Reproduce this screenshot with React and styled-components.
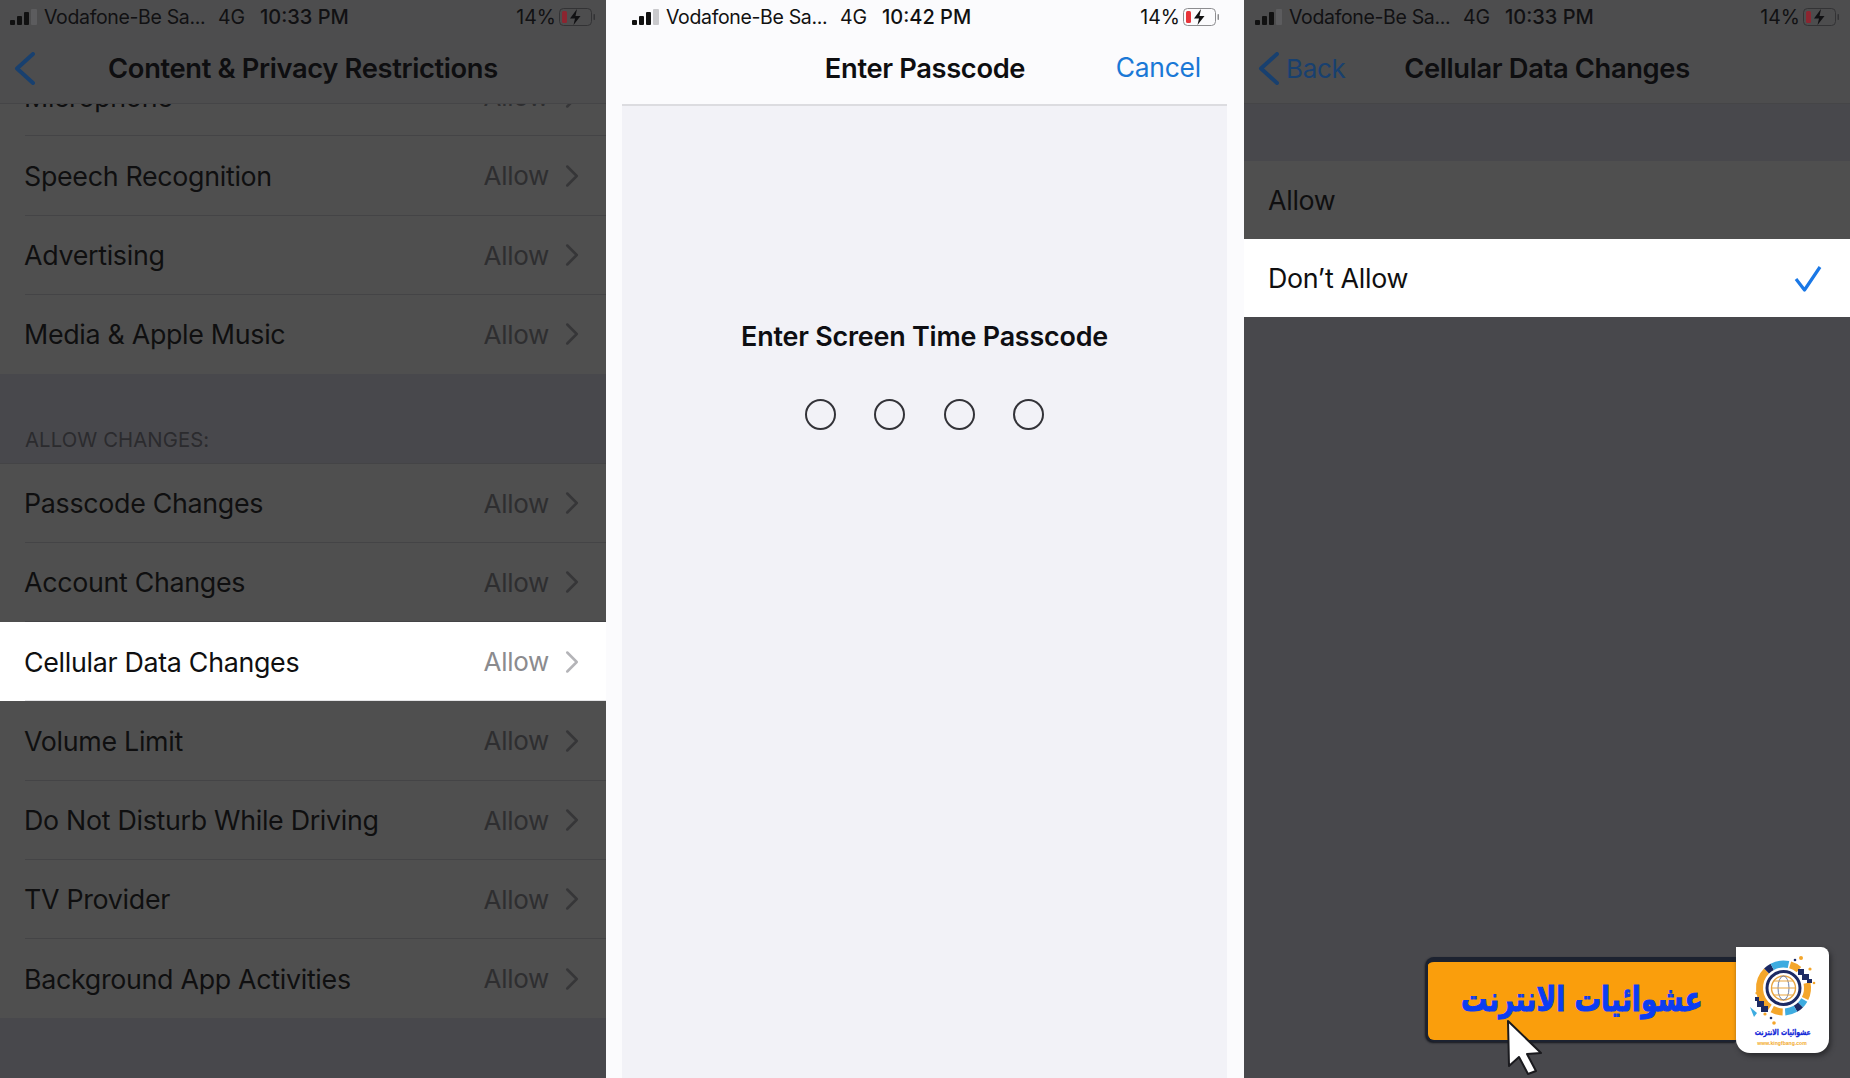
import React from "react";
import styled, { createGlobalStyle } from "styled-components";
import { ChevronRight } from "lucide-react";

/**
 * styles
 */
const GlobalStyle = createGlobalStyle`
  html, body {
    margin: 0;
    padding: 0;
    background: #fff;
  }

  body {
    font-family: Inter, "Liberation Sans", sans-serif;
    -webkit-font-smoothing: antialiased;
  }
`;

const Page = styled.div`
  display: flex;
  width: 1850px;
  height: 1078px;
  overflow: hidden;
`;

const Screen = styled.section`
  position: relative;
  display: flex;
  flex-direction: column;
  flex: 0 0 ${({ $width }) => $width}px;
  height: 100%;
  background: #48484c;
`;

const LightScreen = styled.section`
  display: flex;
  flex-direction: column;
  flex: 0 0 638px;
  height: 100%;
  background: #fbfbfd;
`;

const Status = styled.div`
  display: flex;
  align-items: center;
  flex: 0 0 34px;
  padding: ${({ $pad }) => $pad};
  font-size: 19.5px;
  color: ${({ $light }) => ($light ? "#111" : "#111113")};
  background: ${({ $light }) => ($light ? "transparent" : "#4d4d4e")};
`;

const Carrier = styled.span`
  flex: 0 0 174px;
  margin-left: 7px;
  white-space: nowrap;
  letter-spacing: -0.35px;
`;

const Network = styled.span`
  flex: 0 0 42px;
`;

const Clock = styled.span`
  font-size: 20px;
  font-weight: 500;
`;

const Battery = styled.span`
  margin-left: auto;
  display: flex;
  align-items: center;
  gap: 3px;
`;

const NavBar = styled.header`
  position: relative;
  display: flex;
  align-items: center;
  justify-content: center;
  flex: 0 0 70px;
  box-sizing: border-box;
  padding-bottom: 1px;
  font-size: 27.3px;
  font-weight: 600;
  letter-spacing: -0.35px;
  color: #0e0e10;
  background: ${({ $light }) => ($light ? "transparent" : "#4d4d4e")};
  border-bottom: ${({ $light }) =>
    $light ? "none" : "1px solid #454547"};
`;

const NavBack = styled.span`
  position: absolute;
  left: 14px;
  top: 18px;
  display: flex;
  align-items: center;
  gap: 7px;
  height: 33px;
  font-size: 26px;
  font-weight: 400;
  color: #18406f;
`;

const NavAction = styled.span`
  position: absolute;
  right: 43px;
  top: 17px;
  font-size: 26.4px;
  font-weight: 400;
  letter-spacing: -0.2px;
  color: #1a78d6;
`;

const Scroller = styled.div`
  flex: 1;
  overflow: hidden;
`;

const List = styled.div`
  margin-top: -47px;
`;

const Group = styled.div`
  background: ${({ $light }) => ($light ? "#fff" : "#4f4f4f")};
`;

const Row = styled.div`
  position: relative;
  display: flex;
  align-items: center;
  box-sizing: border-box;
  height: 79.25px;
  padding: 0 15px 0 24px;
  font-size: 26.8px;
  letter-spacing: -0.3px;
  color: #0f0f10;
  background: ${({ $selected }) => ($selected ? "#fff" : "transparent")};

  &::after {
    content: ${({ $last }) => ($last ? "none" : '" "')};
    position: absolute;
    left: 25px;
    right: 0;
    bottom: 0;
    height: 1px;
    background: ${({ $selected }) => ($selected ? "#e4e4e6" : "#444446")};
  }
`;

const OptionRow = styled(Row)`
  height: 78px;
  padding-right: 28px;
`;

const RowValue = styled.span`
  margin-left: auto;
  font-size: 26px;
  color: ${({ $selected }) => ($selected ? "#8b8b8e" : "#2e2e30")};
`;

const RowChevron = styled(ChevronRight)`
  margin-left: 4px;
  color: ${({ $selected }) => ($selected ? "#b4b4b8" : "#363638")};
`;

const Tick = styled.svg`
  margin-left: auto;
`;

const SectionHeader = styled.div`
  display: flex;
  align-items: flex-end;
  box-sizing: border-box;
  height: 89.5px;
  padding: 0 25px 11px;
  font-size: 20.3px;
  letter-spacing: 0.1px;
  color: #2b2b2e;
  border-bottom: 1px solid #444446;
`;

const Content = styled.main`
  flex: 1;
  display: flex;
  flex-direction: column;
  align-items: center;
  margin: 0 17px 0 16px;
  background: #f2f2f7;
  border-top: 2px solid #dcdce0;
`;

const Prompt = styled.h2`
  margin: 213px 0 0;
  font-size: 26.9px;
  font-weight: 600;
  letter-spacing: -0.2px;
  line-height: 34px;
  color: #0e0e12;
`;

const Dots = styled.div`
  display: flex;
  gap: 38.5px;
  margin-top: 46px;
`;

const Dot = styled.span`
  box-sizing: border-box;
  width: 31px;
  height: 31px;
  border: 2px solid #333338;
  border-radius: 50%;
`;

const DetailRows = styled.div`
  margin-top: 57px;
`;

const Badge = styled.div`
  position: absolute;
  left: 182px;
  top: 947px;
  display: flex;
  align-items: flex-start;
`;

const BadgeLabel = styled.div`
  display: flex;
  align-items: center;
  justify-content: center;
  box-sizing: border-box;
  width: 310px;
  height: 85px;
  margin-top: 10px;
  padding-bottom: 5px;
  background: #fa9e0c;
  border: 2px solid #1c2230;
  border-top-width: 5px;
  border-right: none;
  border-radius: 8px 0 0 8px;
  box-shadow: -1px 1px 2px #16181f;
`;

const BadgeText = styled.span`
  direction: rtl;
  font-family: "DejaVu Sans", sans-serif;
  font-size: 34px;
  font-weight: 700;
  white-space: nowrap;
  color: #0b3df2;
  -webkit-text-stroke: 1.1px #0b3df2;
  transform: scaleX(0.78);
`;

const BadgeLogo = styled.div`
  position: relative;
  display: flex;
  flex-direction: column;
  align-items: center;
  box-sizing: border-box;
  width: 93px;
  height: 106px;
  padding-top: 5px;
  background: #fff;
  border-radius: 0 8px 14px 14px;
  box-shadow: 2px 3px 5px #2b2b2e;
`;

const LogoName = styled.span`
  margin-top: 1px;
  direction: rtl;
  font-family: "DejaVu Sans", sans-serif;
  font-size: 8.5px;
  font-weight: 700;
  line-height: 11px;
  white-space: nowrap;
  color: #1126d8;
  -webkit-text-stroke: 0.3px #1126d8;
  transform: scaleX(0.72);
`;

const LogoUrl = styled.span`
  margin-top: 1px;
  font-family: "Liberation Sans", sans-serif;
  font-size: 6px;
  font-weight: 700;
  line-height: 8px;
  white-space: nowrap;
  color: #f2aa2c;
  transform: scaleX(0.85);
`;

const Pointer = styled.svg`
  position: absolute;
  left: 80px;
  top: 72px;
`;

/**
 * drawings
 */
const SignalIcon = ({ light }) => (
  <svg width="27" height="17" viewBox="0 0 27 17">
    <rect x="0" y="11" width="5" height="5" rx="1" fill="#111" />
    <rect x="7" y="7" width="5" height="9" rx="1" fill="#111" />
    <rect x="14" y="3" width="5" height="13" rx="1" fill="#111" />
    <rect x="21" y="0" width="6" height="16" rx="1" fill={light ? "#c9c9cc" : "#5c5c5e"} />
  </svg>
);

const BatteryIcon = ({ light }) => {
  const stroke = light ? "#8d8d90" : "#333335";
  const level = light ? "#e8343a" : "#8c2530";
  const bolt = light ? "#111" : "#111113";
  return (
    <svg width="37" height="19" viewBox="0 0 37 19">
      <rect x="0.5" y="0.5" width="32" height="17" rx="4" fill="none" stroke={stroke} />
      <rect x="3" y="3" width="5" height="12" rx="1.5" fill={level} />
      <path d="M18 1 L11 10.5 L16 10.5 L14.5 17 L21.5 8 L16.5 8 Z" fill={bolt} />
      <rect x="34.5" y="6" width="1.5" height="6" rx="0.7" fill={stroke} />
    </svg>
  );
};

const BackChevron = () => (
  <svg width="21" height="33" viewBox="0 0 21 33">
    <path
      d="M19 2 L3 16.5 L19 31"
      fill="none"
      stroke="#18406f"
      strokeWidth="4"
      strokeLinecap="round"
      strokeLinejoin="round"
    />
  </svg>
);

// arc of the logo ring, angles are degrees clockwise from the top
const ringArc = (from, to, r = 24, cx = 35.5, cy = 36) => {
  const point = (deg) => {
    const rad = (deg * Math.PI) / 180;
    return `${(cx + r * Math.sin(rad)).toFixed(2)} ${(cy - r * Math.cos(rad)).toFixed(2)}`;
  };
  return `M${point(from)} A${r} ${r} 0 ${to - from > 180 ? 1 : 0} 1 ${point(to)}`;
};

const LogoMark = () => (
  <svg width="70" height="74" viewBox="0 0 70 74">
    <g fill="none" strokeWidth="7">
      <path d={ringArc(215, 315)} stroke="#f4a62a" />
      <path d={ringArc(315, 332)} stroke="#1c2a63" />
      <path d={ringArc(332, 372)} stroke="#3eace0" />
      <path d={ringArc(376, 400)} stroke="#f4a62a" />
      <path d={ringArc(78, 116)} stroke="#f4a62a" />
      <path d={ringArc(120, 135)} stroke="#3eace0" />
      <path d={ringArc(135, 150)} stroke="#1c2a63" />
      <path d={ringArc(150, 176)} stroke="#3eace0" />
      <path d={ringArc(182, 208)} stroke="#f4a62a" />
    </g>
    <g fill="none">
      <circle cx="35.5" cy="36" r="16.5" stroke="#1c2a63" strokeWidth="3" fill="#fff" />
      <circle cx="35.5" cy="36" r="12" stroke="#e9a540" strokeWidth="1.4" />
      <ellipse cx="35.5" cy="36" rx="5.5" ry="12" stroke="#6e7ea8" strokeWidth="1" />
      <path d="M23.5 36 H47.5 M25.5 29 H45.5 M25.5 43 H45.5" stroke="#e9a540" strokeWidth="1" />
    </g>
    <g fill="#1c2a63">
      <rect x="50" y="17" width="6" height="6" />
      <rect x="54" y="22" width="7" height="6" />
      <rect x="59" y="27" width="5" height="4" />
      <rect x="9" y="49" width="7" height="6" />
      <rect x="13" y="54" width="7" height="6" />
      <rect x="7" y="45" width="4" height="4" />
      <circle cx="47" cy="8" r="1.3" />
      <circle cx="23" cy="66" r="1.3" />
    </g>
    <g fill="#f4a62a">
      <circle cx="53" cy="6" r="2" />
      <circle cx="62" cy="17" r="1.6" />
      <circle cx="66" cy="31" r="1.3" />
      <circle cx="9" cy="41" r="1.6" />
      <circle cx="17" cy="62" r="1.6" />
      <circle cx="26" cy="71" r="1.8" />
    </g>
    <path d="M2 55 L9 61 L6 65 Z" fill="#3eace0" />
  </svg>
);

/**
 * data
 */
const topRows = ["Microphone", "Speech Recognition", "Advertising", "Media & Apple Music"];
const changeRows = [
  "Passcode Changes",
  "Account Changes",
  "Cellular Data Changes",
  "Volume Limit",
  "Do Not Disturb While Driving",
  "TV Provider",
  "Background App Activities",
];

const StatusBar = ({ time, pad, light }) => (
  <Status $pad={pad} $light={light}>
    <SignalIcon light={light} />
    <Carrier>Vodafone-Be Sa...</Carrier>
    <Network>4G</Network>
    <Clock>{time}</Clock>
    <Battery>
      14%
      <BatteryIcon light={light} />
    </Battery>
  </Status>
);

const SettingRow = ({ label, last }) => {
  const selected = label === "Cellular Data Changes";
  return (
    <Row $selected={selected} $last={last}>
      {label}
      <RowValue $selected={selected}>Allow</RowValue>
      <RowChevron $selected={selected} size={38} strokeWidth={1.6} />
    </Row>
  );
};

const App = () => (
  <Page>
    <GlobalStyle />

    <Screen $width={606}>
      <StatusBar time="10:33 PM" pad="0 10px 0 10px" />
      <NavBar>
        <NavBack>
          <BackChevron />
        </NavBack>
        Content &amp; Privacy Restrictions
      </NavBar>
      <Scroller>
        <List>
          <Group>
            {topRows.map((label, i) => (
              <SettingRow key={label} label={label} last={i === topRows.length - 1} />
            ))}
          </Group>
          <SectionHeader>ALLOW CHANGES:</SectionHeader>
          <Group>
            {changeRows.map((label, i) => (
              <SettingRow key={label} label={label} last={i === changeRows.length - 1} />
            ))}
          </Group>
        </List>
      </Scroller>
    </Screen>

    <LightScreen>
      <StatusBar time="10:42 PM" pad="0 24px 0 26px" light />
      <NavBar $light>
        Enter Passcode
        <NavAction>Cancel</NavAction>
      </NavBar>
      <Content>
        <Prompt>Enter Screen Time Passcode</Prompt>
        <Dots>
          <Dot />
          <Dot />
          <Dot />
          <Dot />
        </Dots>
      </Content>
    </LightScreen>

    <Screen $width={606}>
      <StatusBar time="10:33 PM" pad="0 10px 0 11px" />
      <NavBar>
        <NavBack>
          <BackChevron />
          Back
        </NavBack>
        Cellular Data Changes
      </NavBar>
      <DetailRows>
        <Group>
          <OptionRow $last>Allow</OptionRow>
        </Group>
        <Group $light>
          <OptionRow $selected $last>
            Don’t Allow
            <Tick width="28" height="27" viewBox="0 0 28 27">
              <path
                d="M2 14 L10.5 25 L26 2"
                fill="none"
                stroke="#1a78e6"
                strokeWidth="3.2"
                strokeLinejoin="round"
              />
            </Tick>
          </OptionRow>
        </Group>
      </DetailRows>

      <Badge>
        <BadgeLabel>
          <BadgeText>عشوائيات الانترنت</BadgeText>
        </BadgeLabel>
        <BadgeLogo>
          <LogoMark />
          <LogoName>عشوائيات الانترنت</LogoName>
          <LogoUrl>www.kingfbang.com</LogoUrl>
        </BadgeLogo>
        <Pointer width="38" height="56" viewBox="0 0 38 56">
          <path
            d="M2 2 L35 34 L21 35 L30 52 L22 55 L13 38 L3 47 Z"
            fill="#fff"
            stroke="#1a1a1e"
            strokeWidth="2"
            strokeLinejoin="round"
          />
        </Pointer>
      </Badge>
    </Screen>
  </Page>
);

export default App;
